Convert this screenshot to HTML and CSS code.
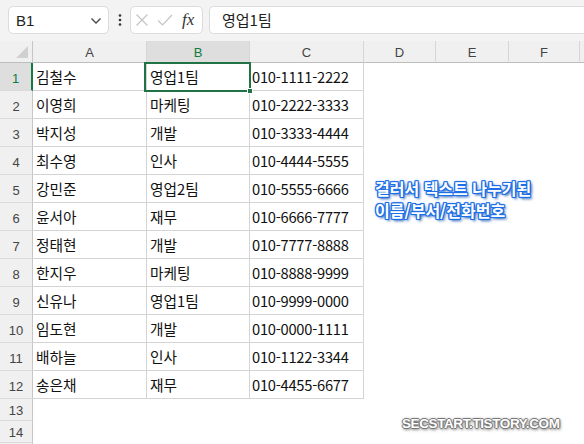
FILE: index.html
```html
<!DOCTYPE html>
<html lang="ko">
<head>
<meta charset="utf-8">
<link rel="stylesheet" href="styles.css">
</head>
<body>
<div class="app">
  <div class="topbar">
    <div class="namebox">
      <span class="ref">B1</span>
      <svg class="chev" width="12" height="8" viewBox="0 0 12 8"><path d="M1.5 1.5 L6 6 L10.5 1.5" fill="none" stroke="#444" stroke-width="1.3"/></svg>
    </div>
    <div class="dots">
      <svg width="4" height="14" viewBox="0 0 4 14"><circle cx="2" cy="2.5" r="1.3" fill="#333"/><circle cx="2" cy="7" r="1.3" fill="#333"/><circle cx="2" cy="11.5" r="1.3" fill="#333"/></svg>
    </div>
    <div class="fxbox">
      <svg width="14" height="14" viewBox="0 0 14 14"><path d="M1.5 1.5 L12.5 12.5 M12.5 1.5 L1.5 12.5" stroke="#c4c4c4" stroke-width="1.2" fill="none"/></svg>
      <svg width="16" height="14" viewBox="0 0 16 14"><path d="M1 7.5 L5.5 12 L15 2" stroke="#c4c4c4" stroke-width="1.2" fill="none"/></svg>
      <span class="fx">fx</span>
    </div>
    <div class="formula">영업1팀</div>
  </div>

  <div class="sheet">
    <div class="corner"><span class="tri"></span></div>
    <div class="ch">A</div>
    <div class="ch sel">B</div>
    <div class="ch">C</div>
    <div class="ch">D</div>
    <div class="ch">E</div>
    <div class="ch">F</div>
    <div class="ch last"></div>

    <div class="rh selrow">1</div><div class="c">김철수</div><div class="c cur">영업1팀<span class="selbox"><span class="handle"></span></span></div><div class="c num">010-1111-2222</div><div class="e"></div><div class="e"></div><div class="e"></div><div class="e"></div>
    <div class="rh">2</div><div class="c">이영희</div><div class="c">마케팅</div><div class="c num">010-2222-3333</div><div class="e"></div><div class="e"></div><div class="e"></div><div class="e"></div>
    <div class="rh">3</div><div class="c">박지성</div><div class="c">개발</div><div class="c num">010-3333-4444</div><div class="e"></div><div class="e"></div><div class="e"></div><div class="e"></div>
    <div class="rh">4</div><div class="c">최수영</div><div class="c">인사</div><div class="c num">010-4444-5555</div><div class="e"></div><div class="e"></div><div class="e"></div><div class="e"></div>
    <div class="rh">5</div><div class="c">강민준</div><div class="c">영업2팀</div><div class="c num">010-5555-6666</div><div class="e"></div><div class="e"></div><div class="e"></div><div class="e"></div>
    <div class="rh">6</div><div class="c">윤서아</div><div class="c">재무</div><div class="c num">010-6666-7777</div><div class="e"></div><div class="e"></div><div class="e"></div><div class="e"></div>
    <div class="rh">7</div><div class="c">정태현</div><div class="c">개발</div><div class="c num">010-7777-8888</div><div class="e"></div><div class="e"></div><div class="e"></div><div class="e"></div>
    <div class="rh">8</div><div class="c">한지우</div><div class="c">마케팅</div><div class="c num">010-8888-9999</div><div class="e"></div><div class="e"></div><div class="e"></div><div class="e"></div>
    <div class="rh">9</div><div class="c">신유나</div><div class="c">영업1팀</div><div class="c num">010-9999-0000</div><div class="e"></div><div class="e"></div><div class="e"></div><div class="e"></div>
    <div class="rh">10</div><div class="c">임도현</div><div class="c">개발</div><div class="c num">010-0000-1111</div><div class="e"></div><div class="e"></div><div class="e"></div><div class="e"></div>
    <div class="rh">11</div><div class="c">배하늘</div><div class="c">인사</div><div class="c num">010-1122-3344</div><div class="e"></div><div class="e"></div><div class="e"></div><div class="e"></div>
    <div class="rh">12</div><div class="c">송은채</div><div class="c">재무</div><div class="c num">010-4455-6677</div><div class="e"></div><div class="e"></div><div class="e"></div><div class="e"></div>
    <div class="rh small">13</div><div class="e span"></div>
    <div class="rh small">14</div><div class="e span"></div>
    <div class="rh small"></div><div class="e span"></div>
  </div>

  <div class="note"><div class="line">걸러서 텍스트 나누기된</div><div class="line">이름/부서/전화번호</div></div>
  <div class="mark">SECSTART.TISTORY.COM</div>
</div>
</body>
</html>
```

FILE: styles.css
```css
* { box-sizing: border-box; }
html, body { margin: 0; padding: 0; }
body {
  width: 584px;
  height: 444px;
  overflow: hidden;
  background: #ffffff;
  font-family: "Noto Sans CJK KR", "Noto Sans", sans-serif;
}
.app { position: relative; width: 584px; height: 444px; overflow: hidden; }

.topbar {
  height: 41px;
  background: #f3f3f3;
  display: flex;
  align-items: flex-start;
  padding: 6px 0 0 8px;
}
.namebox {
  width: 101px;
  height: 28px;
  background: #fff;
  border: 1px solid #dcdcdc;
  border-radius: 5px;
  display: flex;
  align-items: center;
  justify-content: space-between;
  padding: 0 6px 0 7px;
}
.ref { font-family: "Liberation Sans", "Noto Sans", sans-serif; font-size: 15px; color: #222; }
.chev { margin-top: 1px; }
.dots { width: 21px; height: 28px; display: flex; align-items: center; justify-content: center; }
.fxbox {
  width: 73px;
  height: 28px;
  background: #fff;
  border: 1px solid #dcdcdc;
  border-radius: 5px;
  display: flex;
  align-items: center;
  gap: 8px;
  padding: 0 0 0 4px;
}
.fx {
  font-family: "Liberation Serif", "DejaVu Serif", serif;
  font-style: italic;
  font-size: 17px;
  color: #333;
  margin-left: 1px;
}
.formula {
  flex: 1;
  margin-left: 6px;
  height: 28px;
  background: #fff;
  border: 1px solid #dcdcdc;
  border-right: none;
  border-radius: 5px 0 0 5px;
  padding: 0 0 0 12px;
  font-size: 15px;
  line-height: 25px;
  color: #222;
}

.sheet {
  display: grid;
  grid-template-columns: 33px 114px 103px 114px 72px 73px 71px 1fr;
  grid-template-rows: 22px repeat(12, 28px) 22px 22px 22px;
}
.corner {
  background: #f0f0f0;
  border-right: 1px solid #c6c6c6;
  border-bottom: 1px solid #bdbdbd;
  position: relative;
}
.tri {
  position: absolute;
  right: 4px;
  bottom: 4px;
  width: 0; height: 0;
  border-left: 12px solid transparent;
  border-bottom: 12px solid #d0d0d0;
}
.ch {
  background: #f0f0f0;
  border-right: 1px solid #d6d6d6;
  border-bottom: 1px solid #bdbdbd;
  font-family: "Liberation Sans", sans-serif;
  font-size: 13px;
  color: #444;
  display: flex;
  align-items: center;
  justify-content: center;
  padding-top: 2px;
}
.ch.sel { background: #dedede; color: #107c41; }
.ch.last { border-right: none; }
.rh {
  background: #f0f0f0;
  border-right: 1px solid #c6c6c6;
  border-bottom: 1px solid #dadada;
  font-family: "Liberation Sans", sans-serif;
  font-size: 13px;
  color: #444;
  display: flex;
  align-items: center;
  justify-content: center;
  padding-top: 4px;
}
.rh.small { padding-top: 2px; }
.rh.selrow { background: #dedede; color: #107c41; border-right: 2px solid #107c41; }
.c {
  border-right: 1px solid #d4d4d4;
  border-bottom: 1px solid #d4d4d4;
  font-size: 14.7px;
  color: #111;
  padding: 0 0 0 3px;
  display: flex;
  align-items: center;
  white-space: nowrap;
}
.num { letter-spacing: -0.25px; padding-left: 2px; }
.cur { position: relative; }
.selbox {
  position: absolute;
  left: -3px; top: -1px; right: -2px; bottom: -2px;
  border: 2px solid #217346;
  pointer-events: none;
}
.handle {
  position: absolute;
  right: -4px; bottom: -4px;
  width: 6px; height: 6px;
  background: #217346;
  border: 1px solid #fff;
}
.e { background: #fff; }
.span { grid-column: 2 / -1; }

.note {
  position: absolute;
  left: 375px;
  top: 176px;
  font-size: 16px;
  font-weight: 700;
  color: #fff;
  display: flex;
  flex-direction: column;
  gap: 0;
  text-shadow:
    1px 0 0 #1c6fe6, -1px 0 0 #1c6fe6, 0 1px 0 #1c6fe6, 0 -1px 0 #1c6fe6,
    1px 1px 0 #1c6fe6, -1px -1px 0 #1c6fe6, 1px -1px 0 #1c6fe6, -1px 1px 0 #1c6fe6,
    0 0 3px #1a66dd, 2px 2px 3px #0a4aa8;
}
.note .line { height: 22px; line-height: 24px; }
.mark {
  position: absolute;
  left: 402px;
  top: 416px;
  font-family: "Liberation Sans", sans-serif;
  font-size: 13.5px;
  font-weight: 700;
  letter-spacing: -0.4px;
  color: #fff;
  text-shadow:
    1px 0 0 #777, -1px 0 0 #777, 0 1px 0 #777, 0 -1px 0 #777,
    0 0 3px #666, 1px 2px 3px #888;
}
```
